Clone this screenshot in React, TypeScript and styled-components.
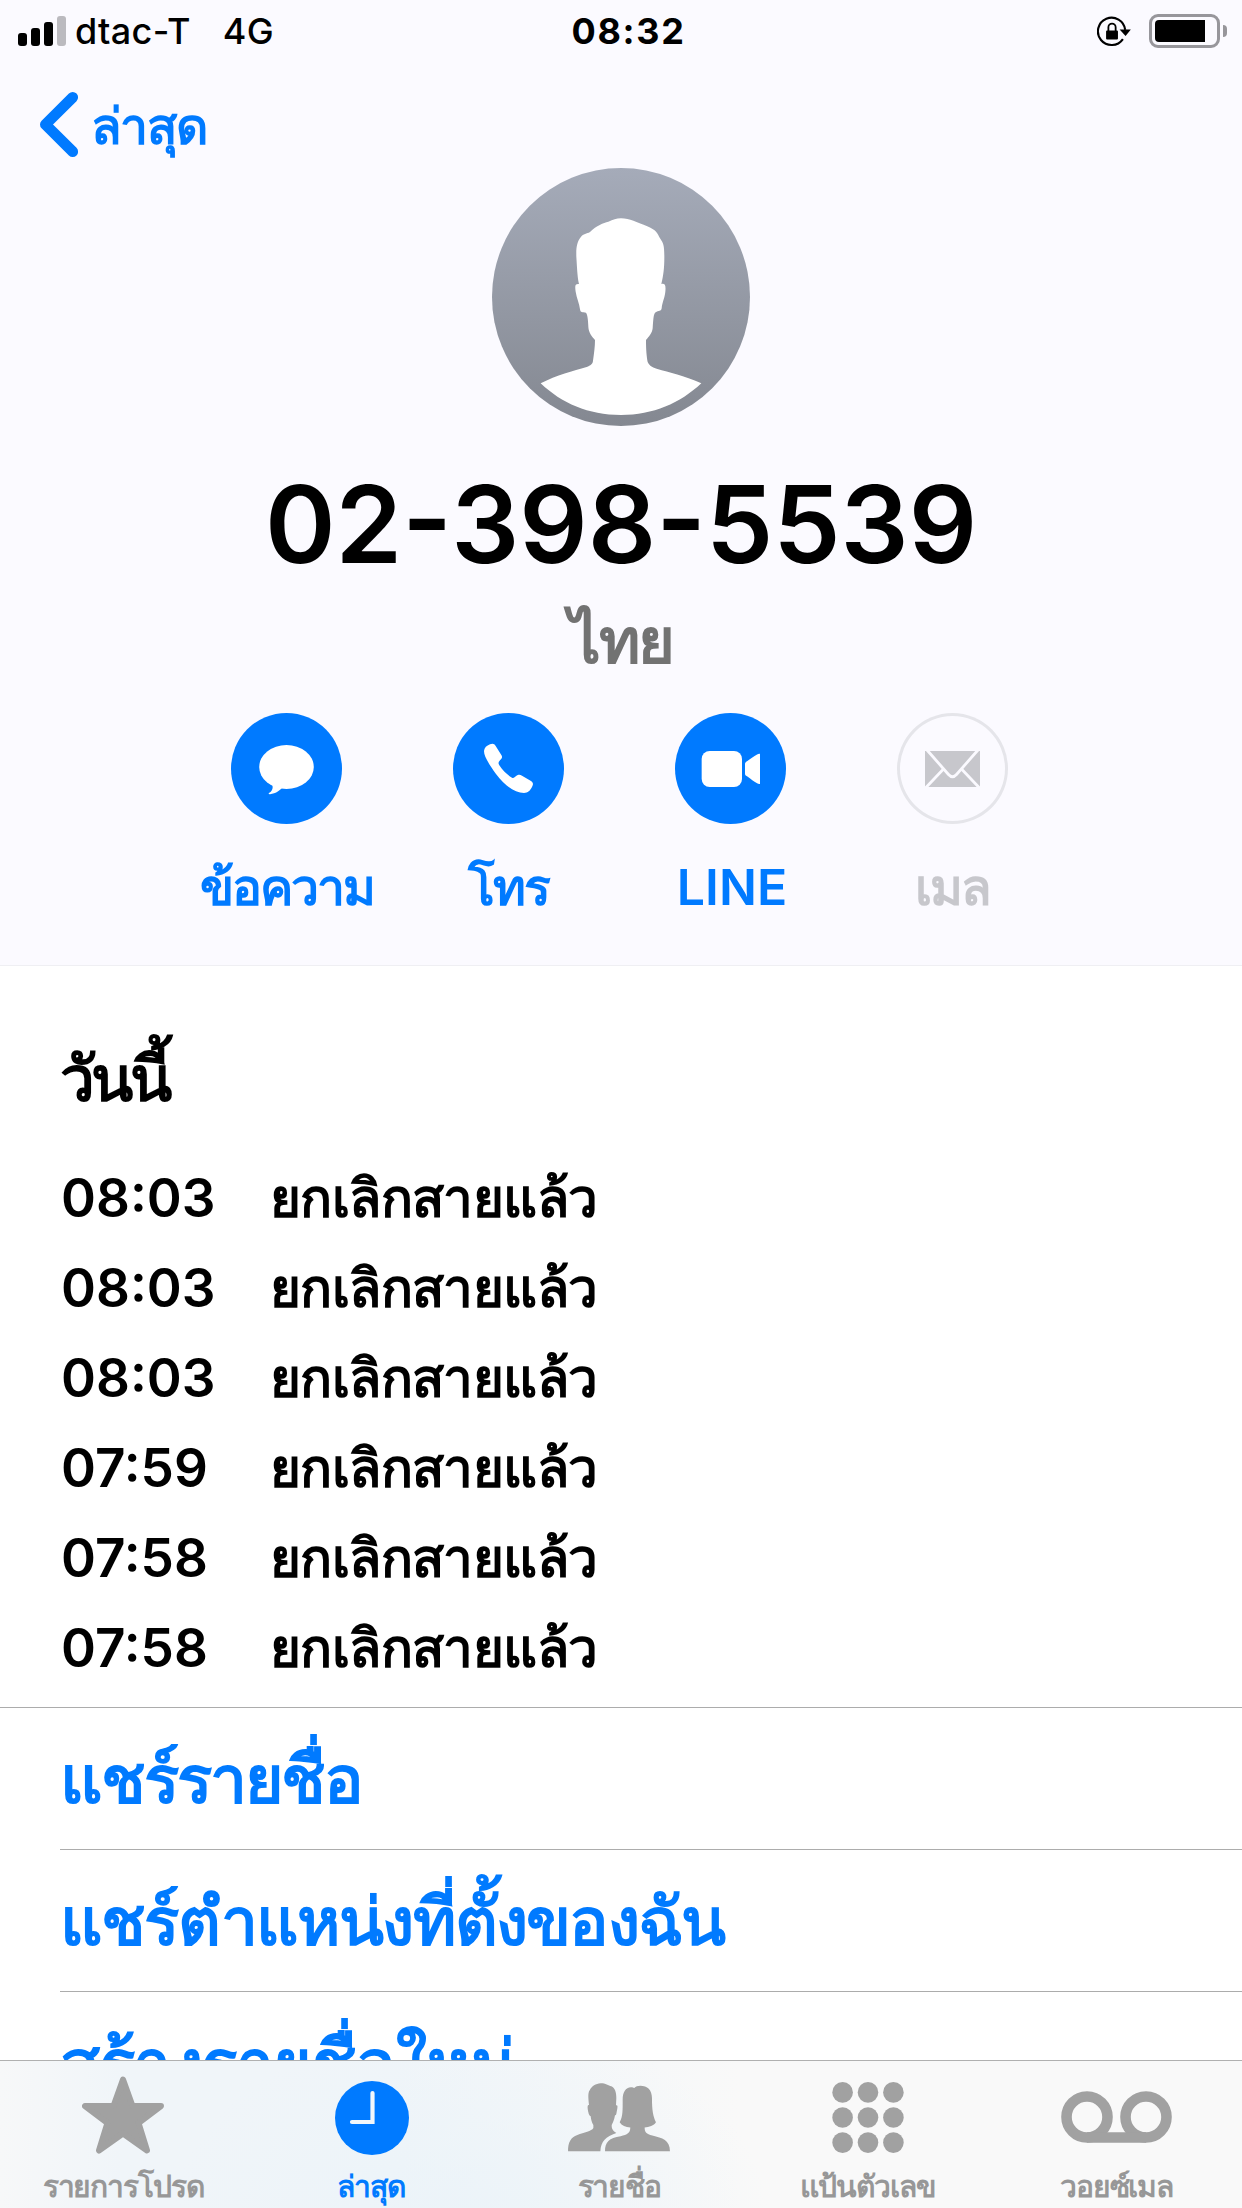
import React, { ReactNode } from 'react';
import styled, { createGlobalStyle } from 'styled-components';

const blue = '#007aff';
const grey = '#a1a1a1';
const family = "Inter, 'Liberation Sans', sans-serif";

const Global = createGlobalStyle`
  * { box-sizing: border-box; }
  body { margin: 0; background: #fff; }
`;

const Screen = styled.div`
  width: 1242px;
  height: 2208px;
  display: flex;
  flex-direction: column;
  overflow: hidden;
  background: #fff;
  color: #000;
  font-family: ${family};
  white-space: nowrap;
`;

const Header = styled.header`
  flex: none;
  height: 966px;
  display: flex;
  flex-direction: column;
  align-items: center;
  background: #fbfaff;
  border-bottom: 1px solid #efeff3;
`;

const StatusBar = styled.div`
  width: 100%;
  height: 60px;
  padding: 0 15px 0 18px;
  display: grid;
  grid-template-columns: 1fr auto 1fr;
  align-items: center;
`;

const Carrier = styled.div`
  display: flex;
  align-items: center;
  font-size: 36px;
  font-weight: 500;
  line-height: 62px;
  letter-spacing: 0.3px;
`;

const Signal = styled.div`
  display: flex;
  align-items: flex-end;
  gap: 4px;
  height: 30px;
  margin-right: 9px;
`;

const Bar = styled.i<{ $h: number; $dim?: boolean }>`
  width: 9px;
  height: ${p => p.$h}px;
  border-radius: 3px;
  background: ${p => (p.$dim ? '#bbbabf' : '#000')};
`;

const Network = styled.span`
  margin-left: 32px;
`;

const Clock = styled.div`
  padding-left: 12px;
  font-size: 36px;
  font-weight: 700;
  line-height: 62px;
  letter-spacing: 1.7px;
`;

const StatusRight = styled.div`
  display: flex;
  justify-content: flex-end;
  align-items: center;
`;

const Battery = styled.div`
  width: 71px;
  height: 34px;
  margin: 0 3px 0 18px;
  padding: 3px;
  border: 3px solid #97969b;
  border-radius: 9px;
`;

const Charge = styled.div`
  width: 50px;
  height: 22px;
  border-radius: 4px 0 0 4px;
  background: #000;
`;

const Nub = styled.div`
  width: 4px;
  height: 12px;
  border-radius: 0 4px 4px 0;
  background: #97969b;
`;

const NavBar = styled.nav`
  width: 100%;
  height: 108px;
  padding-left: 38px;
  display: flex;
  align-items: flex-start;
`;

const BackIcon = styled.svg`
  margin-top: 30px;
  width: 42px;
  height: 68px;
`;

const BackLabel = styled.span`
  margin: 31px 0 0 11px;
  font-size: 50px;
  font-weight: 700;
  line-height: 70px;
  letter-spacing: -1.6px;
  color: ${blue};
`;

const Avatar = styled.svg`
  flex: none;
  width: 258px;
  height: 258px;
`;

const PhoneNumber = styled.h1`
  margin: 33px 0 0;
  font-size: 107px;
  font-weight: 600;
  line-height: 130px;
`;

const Country = styled.div`
  margin-top: 6px;
  font-size: 63px;
  font-weight: 700;
  line-height: 90px;
  letter-spacing: -2.4px;
  color: #727272;
`;

const Actions = styled.div`
  display: flex;
  margin-top: 28px;
  padding-right: 3px;
`;

const Action = styled.div<{ $off?: boolean }>`
  width: 222px;
  display: flex;
  flex-direction: column;
  align-items: center;
  color: ${p => (p.$off ? '#c7c7cc' : blue)};
`;

const ActionCircle = styled.div<{ $off?: boolean }>`
  width: 111px;
  height: 111px;
  border-radius: 50%;
  background: ${p => (p.$off ? 'transparent' : blue)};
  box-shadow: ${p => (p.$off ? 'inset 0 0 0 3px #e5e5ea' : 'none')};
  svg { display: block; width: 111px; height: 111px; }
`;

const ActionLabel = styled.span<{ $latin?: boolean }>`
  margin-top: 28px;
  padding-left: ${p => (p.$latin ? 3 : 0)}px;
  font-size: 50px;
  font-weight: ${p => (p.$latin ? 600 : 700)};
  line-height: 70px;
  letter-spacing: ${p => (p.$latin ? 0 : -2)}px;
`;

const Content = styled.main`
  flex: 1;
  min-height: 0;
  overflow: hidden;
`;

const History = styled.section`
  height: 742px;
  padding: 63px 60px 0;
  border-bottom: 1px solid #acacac;
`;

const DayTitle = styled.h2`
  margin: 0 0 24px;
  font-size: 62px;
  font-weight: 700;
  line-height: 100px;
  letter-spacing: -3.6px;
`;

const CallRow = styled.div`
  display: flex;
  height: 90px;
  padding-left: 1px;
  line-height: 90px;
  font-size: 53px;
`;

const CallTime = styled.span`
  width: 209px;
  font-weight: 600;
`;

const CallState = styled.span`
  font-weight: 700;
  letter-spacing: -0.6px;
`;

const LinkRow = styled.div<{ $tracking: number }>`
  height: 142px;
  margin-left: 60px;
  border-bottom: 1px solid #acacac;
  font-size: 66px;
  font-weight: 700;
  line-height: 142px;
  letter-spacing: ${p => p.$tracking}px;
  color: ${blue};
`;

const TabBar = styled.footer`
  flex: none;
  height: 148px;
  border-top: 1px solid #b0b0b0;
  display: grid;
  grid-template-columns: 246.4px repeat(4, 248.6px);
  background:
    radial-gradient(ellipse 300px 200px at 470px 160px, rgba(234, 243, 249, 0.8) 0%, rgba(240, 245, 249, 0) 100%),
    linear-gradient(90deg, #f7f8f9 0, #f0f5f9 120px, #f0f5f9 400px, #f9f9f9 740px);
`;

const Tab = styled.div<{ $on?: boolean }>`
  display: flex;
  flex-direction: column;
  align-items: center;
  color: ${p => (p.$on ? blue : '#979797')};
`;

const TabIcon = styled.div<{ $top: number }>`
  height: 100px;
  padding-top: ${p => p.$top}px;
  svg { display: block; }
`;

const TabLabel = styled.span`
  font-size: 30px;
  font-weight: 700;
  line-height: 51px;
  letter-spacing: -1.1px;
`;

const MessageIcon = () => (
  <svg viewBox="0 0 111 111" fill="#fff">
    <ellipse cx="55.5" cy="54" rx="27.3" ry="22" />
    <path d="M41 71C43 76 40 79 38 80C37 81 38 81.5 40 81C46 80 49 77 52 74Z" />
  </svg>
);

const PhoneIcon = () => (
  <svg viewBox="-51 39 333 333" fill="#fff">
    <path d="M60 133C68 130 73 131 77 138L94 165C99 173 94 176 90 181C85 186 84 190 88 196C98 212 112 225 126 233C131 235 134 232 138 228C146 223 150 224 156 227L183 243C190 248 190 253 187 259C180 273 174 279 162 279C135 278 105 258 78 222C55 190 42 168 42 153C43 143 50 137 60 133Z" />
  </svg>
);

const VideoIcon = () => (
  <svg viewBox="615 39 333 333" fill="#fff">
    <rect x="695" y="153" width="121" height="108" rx="24" />
    <path d="M825 193C825 188 827 187 831 184C843 175 852 168 860 164C866 161 870 161 870 163V251C870 253 866 252 860 249C852 245 843 238 831 229C827 226 825 225 825 221Z" />
  </svg>
);

const MailIcon = () => (
  <svg viewBox="0 0 111 111">
    <rect x="28" y="38" width="55" height="36" fill="#c7c7cc" />
    <g fill="none" stroke="#fbfaff" strokeWidth="2.8">
      <path d="M30 37L51.500 61.500Q55.500 66 59.500 61.500L81 37" />
      <path d="M28 75.500L46.500 56M83 75.500L64.500 56" />
    </g>
  </svg>
);

const StarIcon = () => (
  <svg width="82" height="78" viewBox="0 0 82 78" fill={grey} stroke={grey} strokeWidth="6" strokeLinejoin="round">
    <path d="M41 3.500L50.500 30H79L56.500 47L65 74.500L41 57.500L17 74.500L25.500 47L3 30H31.500Z" />
  </svg>
);

const RecentsIcon = () => (
  <svg width="76" height="76" viewBox="0 0 76 76">
    <circle cx="39" cy="38" r="37" fill={blue} />
    <path d="M39.500 13V42H19" fill="none" stroke="#f2f7fb" strokeWidth="4.200" strokeLinecap="round" />
  </svg>
);

const ContactsIcon = () => (
  <svg width="102" height="68.600" viewBox="27 50 306 206" fill={grey}>
    <path d="M125 51C140 51 148 58 157 60C168 65 172 78 172 95L171 117C177 116 176 122 174 132C172 142 172 148 168 147C166 160 162 168 158 176C158 187 160 192 172 200C140 211 126 225 124 255H27C27 228 35 213 55 206C75 198 98 195 103 185V176C98 168 96 160 95 150C90 148 88 140 86 128C85 118 87 114 90 117C88 95 86 80 92 72C98 60 110 52 125 51Z" />
    <path d="M244 58C265 58 279 70 279 95C279 130 282 150 291 168C285 178 270 182 257 184C257 198 262 204 280 208C310 215 333 222 333 255H138C138 228 150 215 185 210C205 206 214 200 214 184C200 182 188 178 182 168C192 150 191 130 191 100C191 78 200 63 216 63C222 63 222 65 226 65C230 60 236 58 244 58Z" />
  </svg>
);

const KeypadIcon = () => (
  <svg width="72" height="71" viewBox="0 0 72 71" fill={grey}>
    {[10.4, 35.5, 60.6].map(y => [10.6, 36, 61.4].map(x => <circle key={`${x}-${y}`} cx={x} cy={y} r="10.300" />))}
  </svg>
);

const VoicemailIcon = () => (
  <svg width="111" height="52" viewBox="0 0 111 52" fill="none" stroke={grey} strokeWidth="10.600">
    <circle cx="26" cy="26" r="20.500" />
    <circle cx="85" cy="26" r="20.500" />
    <path d="M26 46.500H85" />
  </svg>
);

const RotationLockIcon = () => (
  <svg width="34" height="31" viewBox="36 28 102 94">
    <path d="M121 70A41.500 41.500 0 1 0 114 98" fill="none" stroke="#000" strokeWidth="6.500" />
    <path d="M104 69H138L122 89Z" />
    <rect x="63" y="72" width="36" height="27" rx="3" />
    <path d="M70 74V62a11 11 0 0 1 22 0V74" fill="none" stroke="#000" strokeWidth="5.500" />
  </svg>
);

const actions: { label: string; icon: ReactNode; off?: boolean; latin?: boolean }[] = [
  { label: 'ข้อความ', icon: <MessageIcon /> },
  { label: 'โทร', icon: <PhoneIcon /> },
  { label: 'LINE', icon: <VideoIcon />, latin: true },
  { label: 'เมล', icon: <MailIcon />, off: true },
];

const calls = ['08:03', '08:03', '08:03', '07:59', '07:58', '07:58'];

const links = [
  { text: 'แชร์รายชื่อ', tracking: -2.1 },
  { text: 'แชร์ตำแหน่งที่ตั้งของฉัน', tracking: -1.8 },
  { text: 'สร้างรายชื่อใหม่', tracking: -0.5 },
];

const tabs: { label: string; icon: ReactNode; top: number; on?: boolean }[] = [
  { label: 'รายการโปรด', icon: <StarIcon />, top: 15 },
  { label: 'ล่าสุด', icon: <RecentsIcon />, top: 19, on: true },
  { label: 'รายชื่อ', icon: <ContactsIcon />, top: 22 },
  { label: 'แป้นตัวเลข', icon: <KeypadIcon />, top: 21 },
  { label: 'วอยซ์เมล', icon: <VoicemailIcon />, top: 30 },
];

export default function App() {
  return (
    <Screen>
      <Global />
      <Header>
        <StatusBar>
          <Carrier>
            <Signal><Bar $h={13} /><Bar $h={18} /><Bar $h={24} /><Bar $h={30} $dim /></Signal>
            <span>dtac-T</span>
            <Network>4G</Network>
          </Carrier>
          <Clock>08:32</Clock>
          <StatusRight>
            <RotationLockIcon />
            <Battery><Charge /></Battery>
            <Nub />
          </StatusRight>
        </StatusBar>
        <NavBar>
          <BackIcon viewBox="38 90 42 68" fill="none" stroke={blue} strokeWidth="10.800" strokeLinecap="round" strokeLinejoin="round">
            <path d="M72.700 97.300L45.400 124.500L72.700 151.700" />
          </BackIcon>
          <BackLabel>ล่าสุด</BackLabel>
        </NavBar>
        <Avatar viewBox="66 54 774 774">
          <defs>
            <linearGradient id="avatar" x1="0" y1="0" x2="0" y2="1">
              <stop offset="0" stopColor="#a5abb9" />
              <stop offset="1" stopColor="#848891" />
            </linearGradient>
          </defs>
          <circle cx="453" cy="441" r="387" fill="url(#avatar)" />
          <path fill="#fff" d="M453 205C480 205 500 217 530 228C560 240 562 250 570 265C580 280 583 285 583 320C583 355 580 375 574 402C585 400 588 405 586 425C584 445 577 455 575 475C574 484 565 482 557 487C550 492 550 510 548 535C547 548 537 560 528 570C528 600 530 620 533 636C536 645 545 652 560 656C600 668 640 675 694 700C630 760 550 795 453 795C355 795 275 760 212 700C260 675 310 663 350 651C362 646 368 642 369 632C372 610 375 590 375 570C365 558 356 548 355 530C354 510 353 495 348 488C338 487 331 488 330 478C328 460 320 445 317 425C314 405 316 401 327 402C322 380 321 350 319 320C318 290 322 275 332 262C340 250 350 252 360 246C380 226 400 219 415 215C430 209 438 205 453 205Z" />
        </Avatar>
        <PhoneNumber>02-398-5539</PhoneNumber>
        <Country>ไทย</Country>
        <Actions>
          {actions.map(a => (
            <Action key={a.label} $off={a.off}>
              <ActionCircle $off={a.off}>{a.icon}</ActionCircle>
              <ActionLabel $latin={a.latin}>{a.label}</ActionLabel>
            </Action>
          ))}
        </Actions>
      </Header>
      <Content>
        <History>
          <DayTitle>วันนี้</DayTitle>
          {calls.map((time, i) => (
            <CallRow key={i}>
              <CallTime>{time}</CallTime>
              <CallState>ยกเลิกสายแล้ว</CallState>
            </CallRow>
          ))}
        </History>
        {links.map(l => <LinkRow key={l.text} $tracking={l.tracking}>{l.text}</LinkRow>)}
      </Content>
      <TabBar>
        {tabs.map(t => (
          <Tab key={t.label} $on={t.on}>
            <TabIcon $top={t.top}>{t.icon}</TabIcon>
            <TabLabel>{t.label}</TabLabel>
          </Tab>
        ))}
      </TabBar>
    </Screen>
  );
}
